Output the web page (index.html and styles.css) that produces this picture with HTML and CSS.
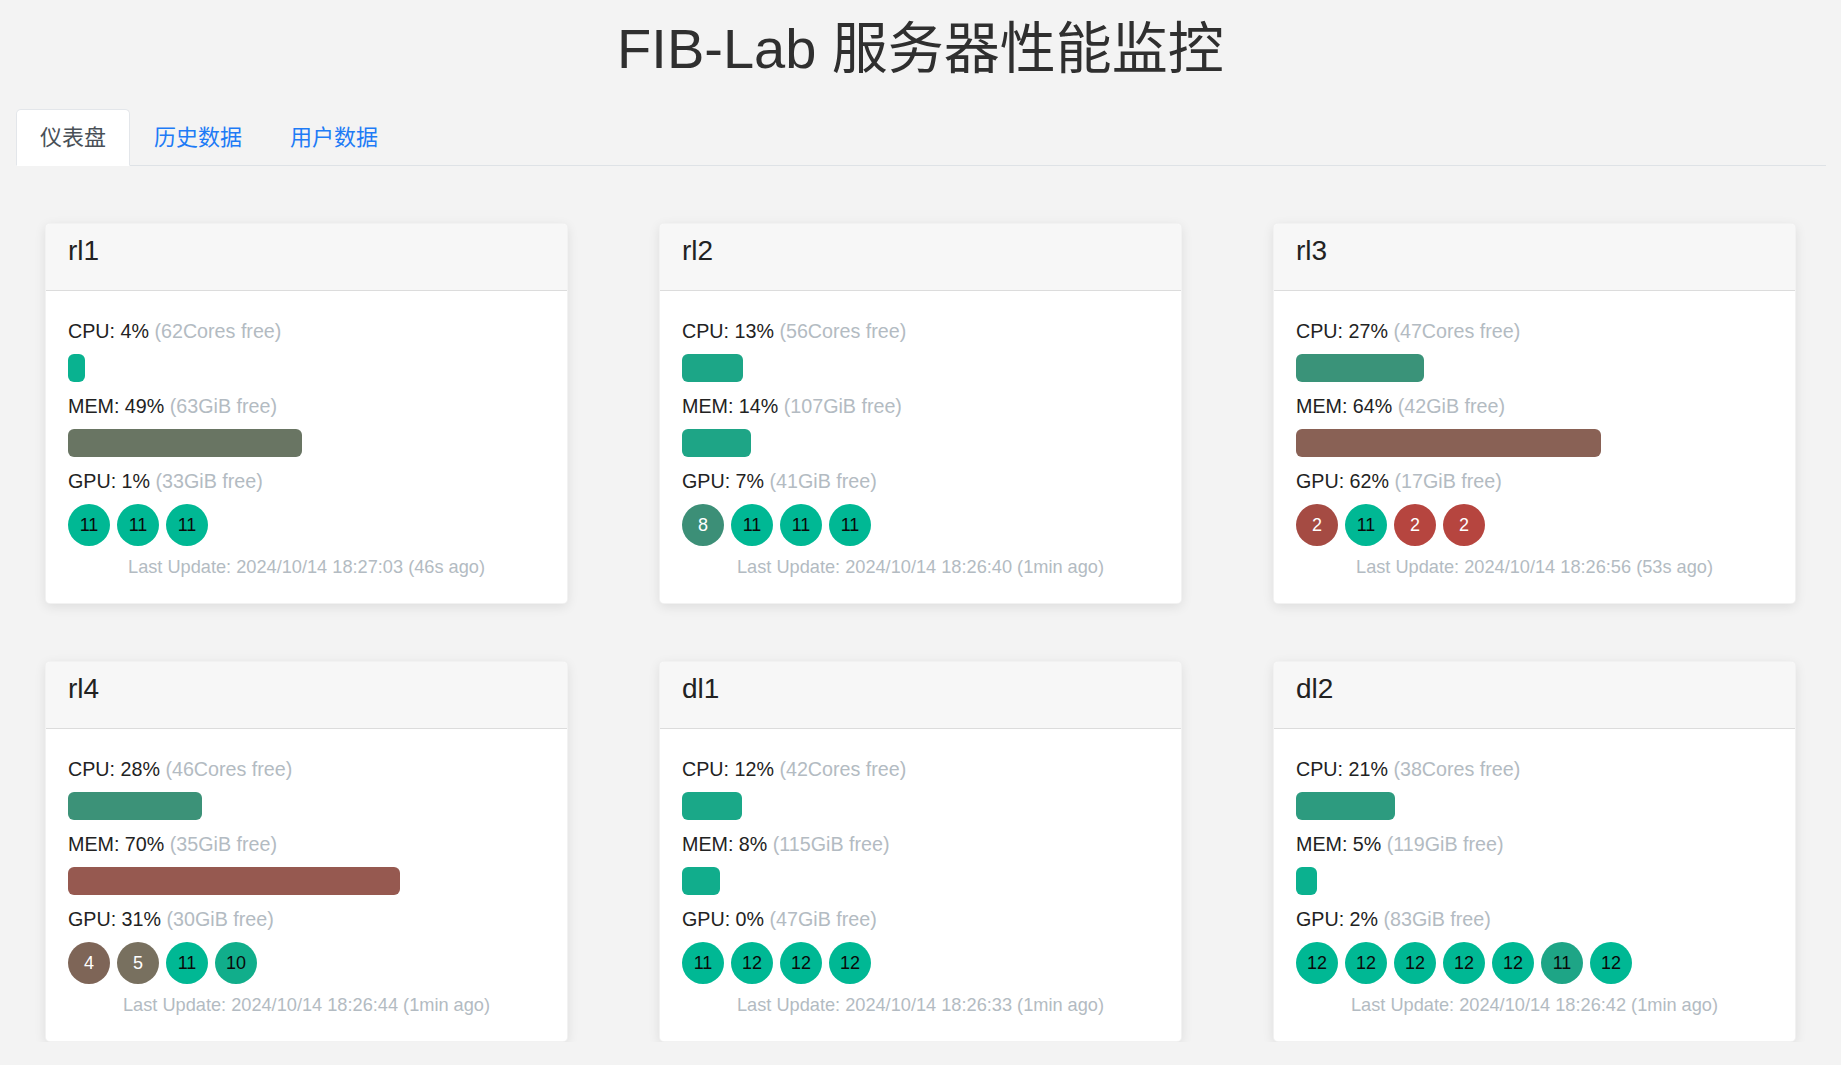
FILE: index.html
```html
<!DOCTYPE html>
<html lang="zh-CN">
<head>
<meta charset="utf-8">
<title>FIB-Lab 服务器性能监控</title>
<link rel="stylesheet" href="styles.css">
</head>
<body>
<h1 class="title">FIB-Lab 服务器性能监控</h1>
<nav class="tabs">
  <a class="tab active">仪表盘</a>
  <a class="tab">历史数据</a>
  <a class="tab">用户数据</a>
</nav>
<main class="grid">
  <section class="card">
    <header class="card-header"><h4>rl1</h4></header>
    <div class="card-body">
      <div class="label">CPU: 4% <span class="muted">(62Cores free)</span></div>
      <div class="bar" style="width:3.5%;background:#09b290"></div>
      <div class="label">MEM: 49% <span class="muted">(63GiB free)</span></div>
      <div class="bar" style="width:49%;background:#697563"></div>
      <div class="label">GPU: 1% <span class="muted">(33GiB free)</span></div>
      <div class="gpus">
        <span class="gpu" style="background:#00b894">11</span>
        <span class="gpu" style="background:#00b894">11</span>
        <span class="gpu" style="background:#00b894">11</span>
      </div>
      <div class="update">Last Update: 2024/10/14 18:27:03 (46s ago)</div>
    </div>
  </section>
  <section class="card">
    <header class="card-header"><h4>rl2</h4></header>
    <div class="card-body">
      <div class="label">CPU: 13% <span class="muted">(56Cores free)</span></div>
      <div class="bar" style="width:12.8%;background:#1ca687"></div>
      <div class="label">MEM: 14% <span class="muted">(107GiB free)</span></div>
      <div class="bar" style="width:14.4%;background:#1ea586"></div>
      <div class="label">GPU: 7% <span class="muted">(41GiB free)</span></div>
      <div class="gpus">
        <span class="gpu light" style="background:#3c8f77">8</span>
        <span class="gpu" style="background:#00b894">11</span>
        <span class="gpu" style="background:#00b894">11</span>
        <span class="gpu" style="background:#00b894">11</span>
      </div>
      <div class="update">Last Update: 2024/10/14 18:26:40 (1min ago)</div>
    </div>
  </section>
  <section class="card">
    <header class="card-header"><h4>rl3</h4></header>
    <div class="card-body">
      <div class="label">CPU: 27% <span class="muted">(47Cores free)</span></div>
      <div class="bar" style="width:26.8%;background:#3a9379"></div>
      <div class="label">MEM: 64% <span class="muted">(42GiB free)</span></div>
      <div class="bar" style="width:64%;background:#896155"></div>
      <div class="label">GPU: 62% <span class="muted">(17GiB free)</span></div>
      <div class="gpus">
        <span class="gpu light" style="background:#a54b43">2</span>
        <span class="gpu" style="background:#00b894">11</span>
        <span class="gpu light" style="background:#b6453f">2</span>
        <span class="gpu light" style="background:#b6453f">2</span>
      </div>
      <div class="update">Last Update: 2024/10/14 18:26:56 (53s ago)</div>
    </div>
  </section>
  <section class="card">
    <header class="card-header"><h4>rl4</h4></header>
    <div class="card-body">
      <div class="label">CPU: 28% <span class="muted">(46Cores free)</span></div>
      <div class="bar" style="width:28%;background:#3c9278"></div>
      <div class="label">MEM: 70% <span class="muted">(35GiB free)</span></div>
      <div class="bar" style="width:69.7%;background:#965950"></div>
      <div class="label">GPU: 31% <span class="muted">(30GiB free)</span></div>
      <div class="gpus">
        <span class="gpu light" style="background:#7e6557">4</span>
        <span class="gpu light" style="background:#78705f">5</span>
        <span class="gpu" style="background:#00b894">11</span>
        <span class="gpu" style="background:#11ae8b">10</span>
      </div>
      <div class="update">Last Update: 2024/10/14 18:26:44 (1min ago)</div>
    </div>
  </section>
  <section class="card">
    <header class="card-header"><h4>dl1</h4></header>
    <div class="card-body">
      <div class="label">CPU: 12% <span class="muted">(42Cores free)</span></div>
      <div class="bar" style="width:12.6%;background:#1aa888"></div>
      <div class="label">MEM: 8% <span class="muted">(115GiB free)</span></div>
      <div class="bar" style="width:7.9%;background:#11ad8c"></div>
      <div class="label">GPU: 0% <span class="muted">(47GiB free)</span></div>
      <div class="gpus">
        <span class="gpu" style="background:#00b894">11</span>
        <span class="gpu" style="background:#00b894">12</span>
        <span class="gpu" style="background:#00b894">12</span>
        <span class="gpu" style="background:#00b894">12</span>
      </div>
      <div class="update">Last Update: 2024/10/14 18:26:33 (1min ago)</div>
    </div>
  </section>
  <section class="card">
    <header class="card-header"><h4>dl2</h4></header>
    <div class="card-body">
      <div class="label">CPU: 21% <span class="muted">(38Cores free)</span></div>
      <div class="bar" style="width:20.7%;background:#2d9b7f"></div>
      <div class="label">MEM: 5% <span class="muted">(119GiB free)</span></div>
      <div class="bar" style="width:4.4%;background:#0bb18f"></div>
      <div class="label">GPU: 2% <span class="muted">(83GiB free)</span></div>
      <div class="gpus">
        <span class="gpu" style="background:#00b894">12</span>
        <span class="gpu" style="background:#00b894">12</span>
        <span class="gpu" style="background:#00b894">12</span>
        <span class="gpu" style="background:#00b894">12</span>
        <span class="gpu" style="background:#00b894">12</span>
        <span class="gpu" style="background:#1ea586">11</span>
        <span class="gpu" style="background:#00b894">12</span>
      </div>
      <div class="update">Last Update: 2024/10/14 18:26:42 (1min ago)</div>
    </div>
  </section>
</main>
</body>
</html>
```
FILE: styles.css
```css
* { box-sizing: border-box; }

html, body {
  margin: 0;
  padding: 0;
  background: #f3f3f3;
  color: #212529;
  font-family: "Liberation Sans", Arial, "Noto Sans CJK SC", sans-serif;
  font-size: 19.7px;
  overflow: hidden;
}

.title {
  margin: 0;
  padding-top: 15px;
  font-size: 56px;
  font-weight: 400;
  line-height: 67px;
  text-align: center;
  color: #2f2f2f;
}

.tabs {
  display: flex;
  margin: 27px 15px 0 16px;
  border-bottom: 1px solid #dee2e6;
}

.tab {
  display: block;
  margin-bottom: -1px;
  padding: 0 23px;
  height: 57px;
  line-height: 55px;
  font-size: 22px;
  color: #1e7bf6;
  border: 1px solid transparent;
  border-radius: 5px 5px 0 0;
  cursor: pointer;
}

.tab.active {
  color: #495057;
  background: #ffffff;
  border-color: #e3e6ea #e3e6ea #ffffff;
}

.grid {
  display: grid;
  grid-template-columns: repeat(3, 1fr);
  column-gap: 91px;
  row-gap: 57px;
  padding: 57px 45px 0;
}

.card {
  background: #ffffff;
  border: 1px solid rgba(0, 0, 0, 0.05);
  border-radius: 5px;
  box-shadow: 0 3px 12px rgba(0, 0, 0, 0.09);
  overflow: hidden;
}

.card-header {
  background: #f7f7f7;
  border-bottom: 1px solid #dcdcdc;
  padding: 10px 22px 22px;
}

.card-header h4 {
  margin: 0;
  font-size: 28px;
  font-weight: 400;
  line-height: 34px;
  color: #222;
}

.card-body {
  padding: 25px 22px 22px;
}

.label {
  line-height: 30px;
  margin-bottom: 8px;
  color: #222;
}

.muted {
  color: #b3bbc2;
}

.bar {
  height: 28px;
  border-radius: 6px;
  margin-bottom: 9px;
}

.gpus {
  display: flex;
  gap: 7px;
  margin-bottom: 8px;
}

.gpu {
  width: 42px;
  height: 42px;
  border-radius: 50%;
  display: flex;
  align-items: center;
  justify-content: center;
  font-size: 18px;
  color: #0a0a0a;
}

.gpu.light {
  color: #ffffff;
}

.update {
  text-align: center;
  font-size: 18.2px;
  line-height: 27px;
  color: #b3bbc2;
}
```
